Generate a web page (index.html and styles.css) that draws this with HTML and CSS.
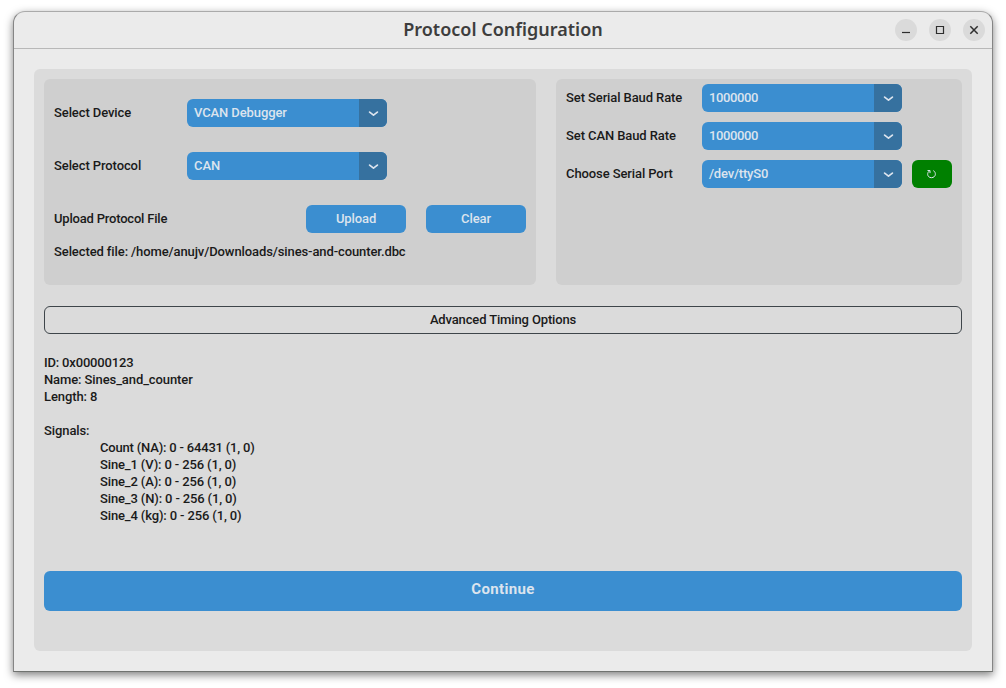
FILE: index.html
```html
<!DOCTYPE html>
<html lang="en">
<head>
<meta charset="utf-8">
<title>Protocol Configuration</title>
<link rel="stylesheet" href="styles.css">
</head>
<body>
<div class="window">
  <header class="titlebar">
    <h1 class="title">Protocol Configuration</h1>
    <div class="controls">
      <button class="control" aria-label="Minimize"><svg width="22" height="22"><path d="M7 13.5h8"/></svg></button>
      <button class="control" aria-label="Maximize"><svg width="22" height="22"><path d="M7.5 7.5h7v7h-7z"/></svg></button>
      <button class="control" aria-label="Close"><svg width="22" height="22"><path class="cross" d="M7.3 7.3l7.4 7.4M14.7 7.3l-7.4 7.4"/></svg></button>
    </div>
  </header>
  <main class="content">
    <div class="panels">
      <section class="panel device">
        <div class="row"><span class="label">Select Device</span><div class="select"><span class="value">VCAN Debugger</span><span class="arrow"><svg width="28" height="28"><path d="M10.6 13.1L14.5 16.2L18.4 13.1"/></svg></span></div></div>
        <div class="row"><span class="label">Select Protocol</span><div class="select"><span class="value">CAN</span><span class="arrow"><svg width="28" height="28"><path d="M10.6 13.1L14.5 16.2L18.4 13.1"/></svg></span></div></div>
        <div class="row upload"><span class="label">Upload Protocol File</span><button class="button">Upload</button><button class="button">Clear</button></div>
        <div class="file"><span>Selected file: /home/anujv/Downloads/sines-and-counter.dbc</span></div>
      </section>
      <section class="panel serial">
        <div class="row"><span class="label">Set Serial Baud Rate</span><div class="select"><span class="value number">1000000</span><span class="arrow"><svg width="28" height="28"><path d="M10.6 13.1L14.5 16.2L18.4 13.1"/></svg></span></div></div>
        <div class="row"><span class="label">Set CAN Baud Rate</span><div class="select"><span class="value number">1000000</span><span class="arrow"><svg width="28" height="28"><path d="M10.6 13.1L14.5 16.2L18.4 13.1"/></svg></span></div></div>
        <div class="row"><span class="label">Choose Serial Port</span><div class="select"><span class="value port">/dev/ttyS0</span><span class="arrow"><svg width="28" height="28"><path d="M10.6 13.1L14.5 16.2L18.4 13.1"/></svg></span></div><button class="refresh" aria-label="Refresh"><svg width="40" height="28"><path d="M15.5 10.5h2.5v2.6M17.7 10.7C14.8 12.3 14.7 17.5 19.4 17.7C24.2 17.5 24.4 12.2 21.3 10.6"/></svg></button></div>
      </section>
    </div>
    <button class="advanced"><span>Advanced Timing Options</span></button>
    <div class="message">
      <p class="id">ID: 0x00000123</p>
      <p>Name: Sines_and_counter</p>
      <p>Length: 8</p>
      <p class="signals-title">Signals:</p>
      <ul class="signals">
        <li class="count">Count (NA): 0 - 64431 (1, 0)</li>
        <li>Sine_1 (V): 0 - 256 (1, 0)</li>
        <li>Sine_2 (A): 0 - 256 (1, 0)</li>
        <li>Sine_3 (N): 0 - 256 (1, 0)</li>
        <li>Sine_4 (kg): 0 - 256 (1, 0)</li>
      </ul>
    </div>
    <button class="continue">Continue</button>
  </main>
</div>
</body>
</html>
```
FILE: styles.css
```css
* { box-sizing: border-box; }
body {
  margin: 0;
  height: 688px;
  padding: 11px 13px 16px;
  background: #fff;
  color: #1a1a1a;
  font: 500 13px/17px Roboto, sans-serif;
  letter-spacing: -0.1px;
  overflow: hidden;
}
button { border: 0; padding: 0; font: inherit; letter-spacing: inherit; color: inherit; }
svg { display: block; fill: none; }
p, ul { margin: 0; padding: 0; list-style: none; }
.window {
  width: 980px;
  height: 661px;
  border: 1px solid #858585;
  border-top-color: #aaa;
  border-bottom-color: #707370;
  border-radius: 12px 12px 0 0;
  background: #ebebeb;
  box-shadow: 0 3px 9px rgba(0, 0, 0, .5);
}
.titlebar {
  display: grid;
  grid-template-columns: 1fr auto 1fr;
  align-items: center;
  height: 37px;
  border-bottom: 1px solid #b8b8b8;
}
.title {
  grid-column: 2;
  margin: 0;
  padding-bottom: 2px;
  font: 600 18px/24px "Noto Sans", sans-serif;
  letter-spacing: 0;
  color: #3d3d3d;
}
.controls { display: flex; justify-content: flex-end; gap: 12px; padding-right: 7px; }
.control { width: 22px; height: 22px; border-radius: 50%; background: #dadada; }
.control svg { stroke: #2e2e2e; stroke-width: 1.2; }
.control .cross { stroke-width: 1.5; }
.content {
  height: 582px;
  margin: 20px 20px 0;
  padding: 10px;
  border-radius: 6px;
  background: #dbdbdb;
}
.panels { display: grid; grid-template-columns: 492px 406px; gap: 20px; height: 206px; }
.panel { border-radius: 6px; background: #cfcfcf; padding: 0 10px; }
.row { display: flex; align-items: center; height: 28px; }
.label, .value { padding-bottom: 2px; }
.device { padding-top: 20px; }
.device .row { margin-bottom: 25px; }
.device .label { width: 133px; }
.device .upload { gap: 20px; margin-bottom: 10px; }
.device .upload .label { width: 232px; letter-spacing: -0.2px; }
.serial { padding-top: 5px; }
.serial .row { margin-bottom: 10px; }
.serial .label { width: 136px; }
.select {
  display: flex;
  justify-content: space-between;
  align-items: center;
  width: 200px;
  height: 28px;
  padding-left: 7px;
  border-radius: 6px;
  background: #3b8ed0;
  color: #dce4ee;
  overflow: hidden;
}
.number { letter-spacing: -0.4px; }
.port { letter-spacing: -0.2px; }
.arrow { background: #36719f; }
.arrow svg { stroke: #dce4ee; stroke-width: 1.7; stroke-linecap: round; stroke-linejoin: round; }
.button { width: 100px; height: 28px; padding-bottom: 2px; border-radius: 6px; background: #3b8ed0; color: #dce4ee; letter-spacing: -0.1px; }
.refresh { width: 40px; height: 28px; margin-left: 10px; border-radius: 6px; background: #008000; }
.refresh svg { stroke: #dce4ee; stroke-width: 1; }
.advanced {
  display: block;
  width: 100%;
  height: 28px;
  margin-top: 21px;
  padding-bottom: 2px;
  border: 1px solid #3e454a;
  border-radius: 6px;
  background: none;
  letter-spacing: -0.14px;
}
.message { height: 217px; margin-top: 20px; }
.id { letter-spacing: -0.18px; }
.signals-title { margin-top: 17px; }
.signals { padding-left: 56px; letter-spacing: -0.14px; }
.count { letter-spacing: -0.19px; }
.continue {
  display: block;
  width: 100%;
  height: 40px;
  padding-bottom: 4px;
  border-radius: 6px;
  background: #3b8ed0;
  color: #dce4ee;
  font-size: 15px;
  font-weight: 700;
  letter-spacing: 0.35px;
}
```
